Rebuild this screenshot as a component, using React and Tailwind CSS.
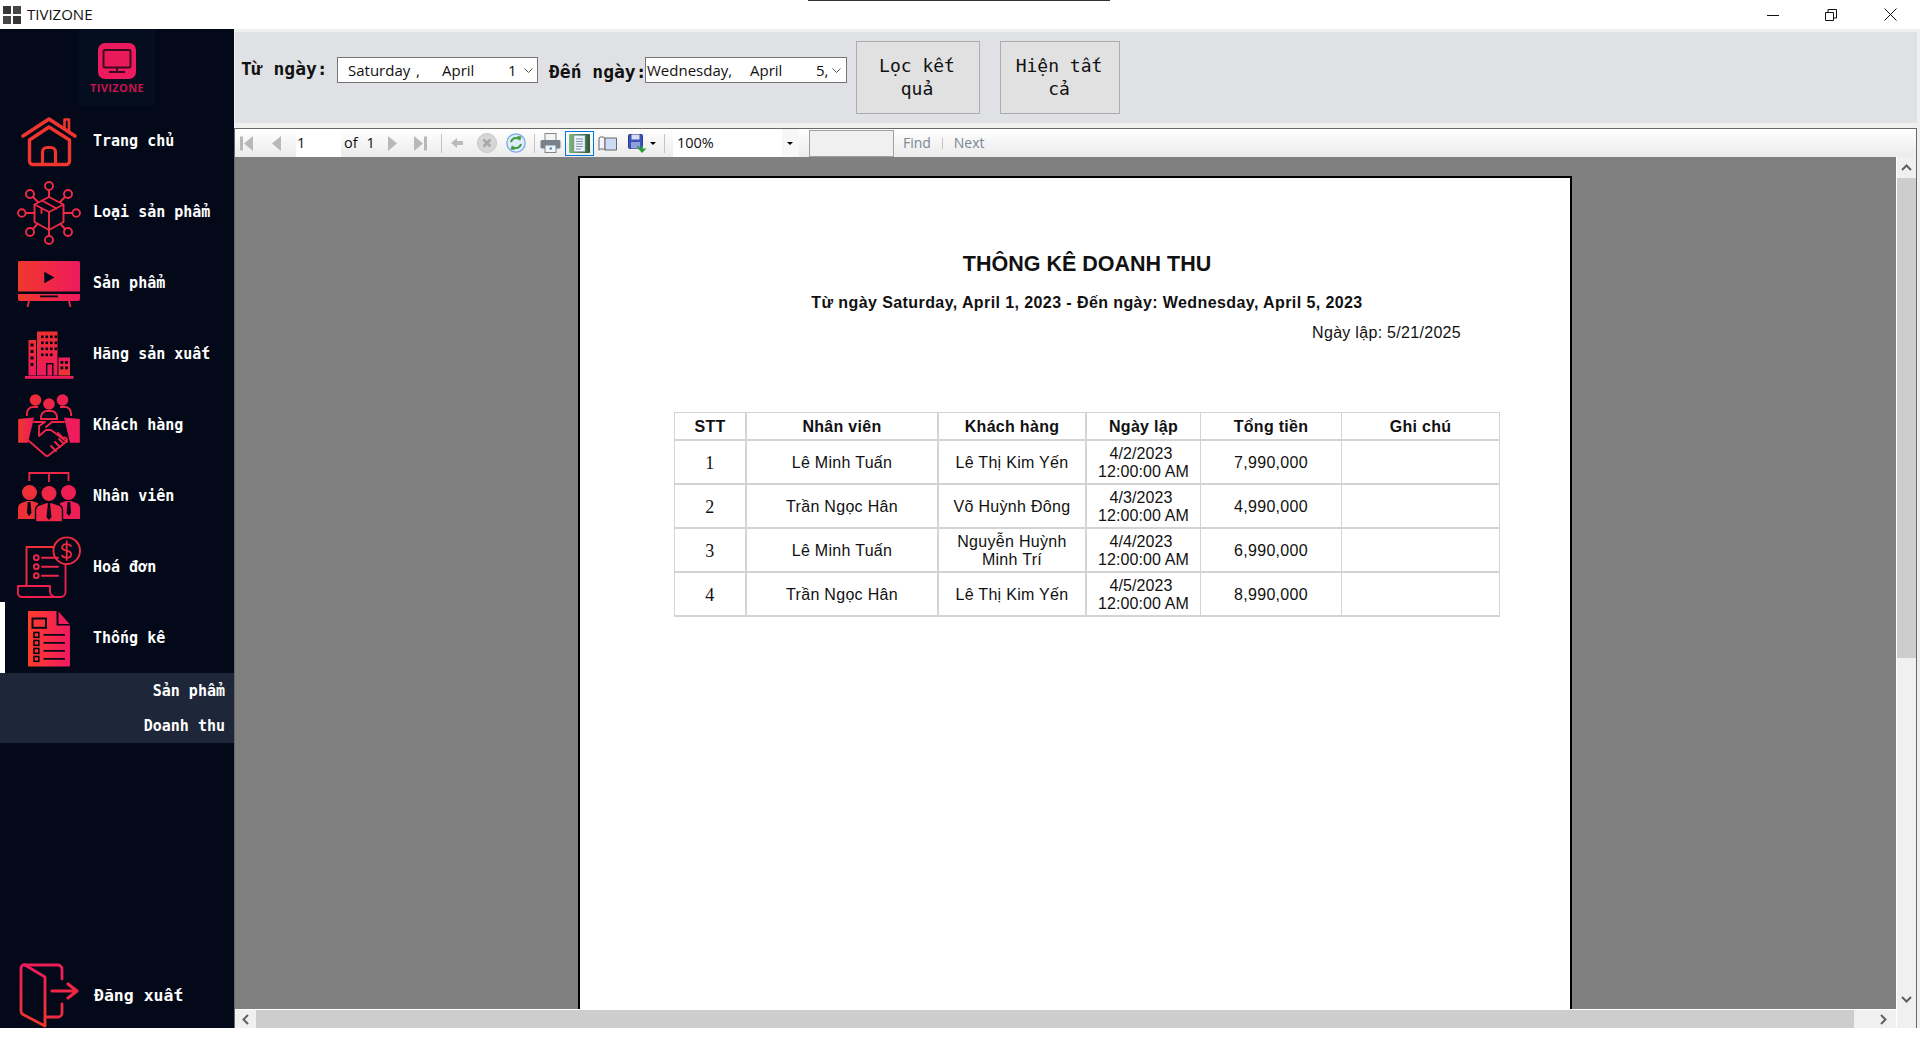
import React from 'react';

const mono = "font-['DejaVu_Sans_Mono','Liberation_Mono',monospace]";
const ui = "font-['Open_Sans','Noto_Sans',sans-serif]";
const arial = "font-['Liberation_Sans',Arial,sans-serif]";

const DARK = '#030919';

const Grads = () => (
  <svg width="0" height="0" className="absolute">
    <defs>
      <linearGradient id="gh" x1="0" y1="0" x2="1" y2="0">
        <stop offset="0" stopColor="#f0382c" />
        <stop offset="1" stopColor="#ee1a5e" />
      </linearGradient>
      <linearGradient id="gv" x1="0" y1="0" x2="0" y2="1">
        <stop offset="0" stopColor="#ee3030" />
        <stop offset="1" stopColor="#ee1a5e" />
      </linearGradient>
      <linearGradient id="gu" x1="0" y1="0" x2="0" y2="1">
        <stop offset="0" stopColor="#ee1a5e" />
        <stop offset="1" stopColor="#f0382c" />
      </linearGradient>
      <linearGradient id="gd" x1="0" y1="0" x2="1" y2="0">
        <stop offset="0" stopColor="#ff3d28" />
        <stop offset="1" stopColor="#ee1a62" />
      </linearGradient>
      <linearGradient id="gpage" x1="0" y1="0" x2="1" y2="0">
        <stop offset="0" stopColor="#7fb87f" />
        <stop offset="1" stopColor="#2f5a38" />
      </linearGradient>
    </defs>
  </svg>
);

const HomeIcon = () => (
  <svg width="64" height="71" viewBox="0 0 64 71" fill="none" stroke="#f0352f" strokeLinecap="round" strokeLinejoin="round">
    <path d="M6 31 L32 14 L58 31" strokeWidth="3.6" />
    <path d="M47.5 23 V14.5 H52 V27" strokeWidth="2.6" />
    <path d="M12.5 35 V56 a3.5 3.5 0 0 0 3.5 3.5 H49 a3.5 3.5 0 0 0 3.5-3.5 V35 L32 22 Z" strokeWidth="3.4" />
    <path d="M25.5 59 V47 a4.5 4.5 0 0 1 4.5-4.5 h4 a4.5 4.5 0 0 1 4.5 4.5 V59" strokeWidth="3.2" />
  </svg>
);

const BoxIcon = () => (
  <svg width="64" height="71" viewBox="0 0 64 71" fill="none" stroke="#ee2a45" strokeWidth="1.9" strokeLinejoin="round" strokeLinecap="round">
    <path d="M32 21 L46.5 28.5 V46 L32 54 L17.5 46 V28.5 Z" />
    <path d="M17.5 28.5 L32 36 L46.5 28.5 M32 36 V54 M25 24.5 L39.5 32.5 M24.5 32 V37" />
    <circle cx="32" cy="10" r="4" />
    <circle cx="32" cy="64" r="4" />
    <circle cx="4.8" cy="37" r="3.8" />
    <circle cx="59.2" cy="37" r="3.8" />
    <circle cx="13" cy="18" r="4" />
    <circle cx="51" cy="18" r="4" />
    <circle cx="13" cy="56" r="4" />
    <circle cx="51" cy="56" r="4" />
    <path d="M32 14 V21 M32 54 V60 M8.6 37 H17.5 M46.5 37 H55.4 M16 21 L21 26 M48 21 L43 26 M16 53 L20.5 48 M48 53 L43.5 48" />
  </svg>
);

const TvIcon = () => (
  <svg width="64" height="71" viewBox="0 0 64 71">
    <path d="M2.5 14 H61.5 a1.5 1.5 0 0 1 1.5 1.5 V44.5 H1 V15.5 a1.5 1.5 0 0 1 1.5-1.5 Z" fill="url(#gh)" />
    <path d="M1 47 H63 V52 a2 2 0 0 1-2 2 H3 a2 2 0 0 1-2-2 Z" fill="url(#gh)" />
    <path d="M12 54 L10.5 60 M52 54 L53.5 60" stroke="#ef2a45" strokeWidth="1.8" />
    <rect x="23" y="48.5" width="18" height="1.8" fill={DARK} />
    <path d="M27.3 24.7 L37.3 30.4 L27.3 36.3 Z" fill={DARK} />
  </svg>
);

const BuildingIcon = () => {
  const win = [];
  [24, 28.5, 33, 37.5].forEach(x => [17.5, 23.5, 29.5, 35.5].forEach(y => {
    if (!(y === 35.5 && x === 37.5)) win.push(<rect key={`${x}-${y}`} x={x} y={y} width="2.6" height="2.6" fill={DARK} />);
  }));
  return (
    <svg width="64" height="71" viewBox="0 0 64 71">
      <rect x="20" y="13.5" width="20.5" height="44" fill="url(#gv)" />
      <rect x="11.5" y="22" width="7.5" height="35.5" fill="url(#gv)" />
      <rect x="41.5" y="39.5" width="11.5" height="18" fill="url(#gu)" />
      <rect x="8" y="58" width="48.5" height="2.8" fill="#ee1a5e" />
      {win}
      {[25.5, 32, 38.5, 45].map(y => <rect key={y} x="13.5" y={y} width="3" height="3" fill={DARK} />)}
      <rect x="29" y="45" width="7.5" height="12.5" fill={DARK} />
      <rect x="30.4" y="46.4" width="4.7" height="11.1" fill="#ee1e55" />
      {[43, 48.5].map(y => [43.5, 48].map(x => <rect key={`${x}${y}`} x={x} y={y} width="2.8" height="2.8" fill={DARK} />))}
    </svg>
  );
};

const ClientIcon = () => (
  <svg width="64" height="71" viewBox="0 0 64 71">
    <circle cx="18.5" cy="11" r="5.8" fill="#ee2d3a" />
    <circle cx="32" cy="15" r="5.8" fill="#ee2645" />
    <circle cx="45.5" cy="11" r="5.8" fill="#ee2050" />
    <g fill="none" stroke="#ee2748" strokeWidth="1.9">
      <path d="M10 27 V24 a6 6 0 0 1 6-6 h5" />
      <path d="M54 27 V24 a6 6 0 0 0-6-6 h-5" />
      <path d="M24 30 V28 a6 6 0 0 1 6-6 h4 a6 6 0 0 1 6 6 v2 Z" />
    </g>
    <path d="M1.2 30 L17 28.5 L11 53.7 H1.2 Z" fill="url(#gh)" />
    <path d="M62.8 30 L47 28.5 L53 53.7 H62.8 Z" fill="#ee1c5a" />
    <g fill="none" stroke="#ee2648" strokeWidth="1.9" strokeLinejoin="round" strokeLinecap="round">
      <path d="M12 52 L28 66 a3 3 0 0 0 4 0 L49 53 a2.5 2.5 0 0 0-3-4 L41 44" />
      <path d="M17 33 H28 L22 37 V47 L29 41 H34 L50 53" />
      <path d="M47 33 H35 L29 38" />
      <path d="M34 57 L39 62 M38 53 L43 58 M42 50 L46 54" />
    </g>
  </svg>
);

const StaffIcon = () => (
  <svg width="64" height="71" viewBox="0 0 64 71">
    <path d="M12.3 21 V13 H51.5 V21 M32 13 V22" fill="none" stroke="#ee2748" strokeWidth="1.8" />
    <circle cx="12.5" cy="32.5" r="7.5" fill="#ee2f38" />
    <circle cx="32" cy="33.5" r="7.5" fill="#ee2645" />
    <circle cx="51.5" cy="32.5" r="7.5" fill="#ee1e52" />
    <path d="M1 59 V48 a6 6 0 0 1 5-5.5 L10 41 H15 L21 43 V59 Z" fill="#ee3035" />
    <path d="M63 59 V48 a6 6 0 0 0-5-5.5 L54 41 H49 L43 43 V59 Z" fill="#ee1d55" />
    <path d="M18.5 62 V50 a6 6 0 0 1 5-5.5 L29 42.5 H35 L40.5 44.5 a6 6 0 0 1 5 5.5 V62 Z" fill="#ee2748" stroke={DARK} strokeWidth="1.4" />
    <path d="M31 43 h2 L34.5 57 L32 60 L29.5 57 Z M10.8 42 h2.6 L14.5 53 L12 56 L10 53 Z M50.6 42 h2.6 L54 53 L52 56 L49.5 53 Z" fill={DARK} />
  </svg>
);

const BillIcon = () => (
  <svg width="64" height="71" viewBox="0 0 64 71" fill="none" strokeWidth="1.9" strokeLinecap="round" strokeLinejoin="round">
    <path d="M36 16 H9.5 V54" stroke="#ee2d3a" />
    <path d="M48.5 33.5 V61 a5 5 0 0 1-5 5 H4 a4 4 0 0 1-3-3.5 V55 H33 V60 a6 6 0 0 0 5.5 6" stroke="#ee1f50" />
    <circle cx="49.7" cy="19.7" r="13.3" stroke="#ee2b3e" />
    <path d="M54 15 c-1-2-7-3-8.5 0 c-1.5 3 1.5 4 4.2 4.7 c3 .8 5.5 2 4.3 5 c-1.3 3-7.5 2.5-9-.2 M49.7 10.5 V29" stroke="#ee2b3e" strokeWidth="1.8" />
    {[26.7, 35.7, 44.7].map(y => (
      <g key={y} stroke="#ee2748">
        <circle cx="19.3" cy={y} r="2.4" />
        <path d={`M25 ${y} H41`} />
      </g>
    ))}
  </svg>
);

const ReportIcon = () => (
  <svg width="64" height="71" viewBox="0 0 64 71">
    <path d="M11 9 H39.5 V23.5 H53 V63.5 a1 1 0 0 1-1 1 H12 a1 1 0 0 1-1-1 Z" fill="url(#gd)" />
    <path d="M41.5 9.5 L52.5 22 H41.5 Z" fill="#ee1c5c" />
    <rect x="15.5" y="16.5" width="13.5" height="9.3" fill="none" stroke={DARK} strokeWidth="2" />
    {[30.5, 38.5, 46.5, 54.5].map(y => (
      <g key={y}>
        <rect x="17" y={y} width="4.8" height="4.8" fill="none" stroke={DARK} strokeWidth="1.6" />
        <rect x="26.5" y={y + 1.5} width="21.5" height="1.7" fill={DARK} />
      </g>
    ))}
  </svg>
);

const LogoutIcon = () => (
  <svg width="64" height="68" viewBox="0 0 64 68" fill="none" strokeWidth="2.8" strokeLinecap="round" strokeLinejoin="round" className="shrink-0">
    <path d="M8 5 H42 a5 5 0 0 1 3 4.5 V19" stroke="#ee1f58" />
    <path d="M45 44 V53 a4 4 0 0 1-4 4 H30" stroke="#ef2c42" />
    <path d="M7 4.5 L28 17 V66 L7 55 a4.5 4.5 0 0 1-3-4 V9 a4.5 4.5 0 0 1 3-4.5 Z" stroke="url(#gu)" />
    <path d="M35 31 H59 M51 24 L60 31 L51 38" stroke="#f02848" strokeWidth="3.2" />
  </svg>
);

const Grey = '#b8b8b8';

const ToolFirst = ({ flip }) => (
  <svg width="13" height="15" viewBox="0 0 13 15" className={flip ? 'scale-x-[-1]' : ''}>
    <rect x="0" y="0.5" width="3" height="14" fill={Grey} />
    <path d="M13 0 V15 L4 7.5 Z" fill={Grey} />
  </svg>
);

const ToolPrev = ({ flip }) => (
  <svg width="9" height="15" viewBox="0 0 9 15" className={flip ? 'scale-x-[-1]' : ''}>
    <path d="M9 0 V15 L0 7.5 Z" fill={Grey} />
  </svg>
);

const ToolBack = () => (
  <svg width="12" height="10" viewBox="0 0 12 10">
    <path d="M0 5 L6 0 V3 H12 V7 H6 V10 Z" fill="#bcbcbc" />
  </svg>
);

const ToolStop = () => (
  <svg width="20" height="20" viewBox="0 0 20 20">
    <circle cx="10" cy="10" r="9.5" fill="#d6d6d6" stroke="#c6c6c6" />
    <path d="M6.5 6.5 L13.5 13.5 M13.5 6.5 L6.5 13.5" stroke="#a8a8a8" strokeWidth="2.6" />
  </svg>
);

const ToolRefresh = () => (
  <svg width="20" height="20" viewBox="0 0 20 20" fill="none">
    <circle cx="10" cy="10" r="9.2" fill="#dfecfa" stroke="#79ace4" strokeWidth="1.3" />
    <path d="M5 9 a5 5 0 0 1 8-3" stroke="#3f9a3f" strokeWidth="2" />
    <path d="M15 11 a5 5 0 0 1-8 3" stroke="#3f9a3f" strokeWidth="2" />
    <path d="M11 3 L15.5 3.5 L14 8 Z M9 17 L4.5 16.5 L6 12 Z" fill="#3f9a3f" />
  </svg>
);

const ToolPrint = () => (
  <svg width="21" height="20" viewBox="0 0 21 20">
    <rect x="5" y="0.5" width="11" height="7" fill="#f4f4f4" stroke="#7d8790" />
    <rect x="0.5" y="7" width="20" height="8.5" rx="1.5" fill="#77828c" />
    <rect x="5" y="12" width="11" height="7.5" fill="#f2f5f8" stroke="#7d8790" />
    <rect x="9.5" y="14.5" width="2.5" height="2" fill="#3a8ad0" />
  </svg>
);

const ToolLayout = () => (
  <div className="flex h-[25px] w-[29px] items-center justify-center border border-[#0078d7]">
    <svg width="21" height="19" viewBox="0 0 21 19">
      <rect width="21" height="19" rx="1" fill="url(#gpage)" />
      <rect x="5" y="1.5" width="11" height="16" fill="#eef3fb" stroke="#8ea4c4" strokeWidth="0.6" />
      <path d="M7 5 H14 M7 7.5 H14 M7 10 H14 M7 12.5 H14 M7 15 H12" stroke="#7d90b0" strokeWidth="1" />
    </svg>
  </div>
);

const ToolBook = () => (
  <svg width="19" height="15" viewBox="0 0 19 15">
    <path d="M7 2 C5 .5 2 .5 1 2 V14 C3 12.5 5 12.5 7 14 Z" fill="#f4f4f4" stroke="#666" />
    <path d="M7 2 H18.5 V14 H7 Z" fill="#c9dcf4" stroke="#666" />
  </svg>
);

const ToolSave = () => (
  <svg width="20" height="19" viewBox="0 0 20 19">
    <rect x="0.5" y="0.5" width="14" height="14" rx="1" fill="#3d52b8" stroke="#2c3a8a" />
    <rect x="3.5" y="0.5" width="8" height="5" fill="#d8def2" />
    <rect x="3" y="8" width="9" height="6.5" fill="#8ea0de" />
    <path d="M9 11 L12.5 14 L15 11 L15 14.5 H18.5 L14 19 L10 14.5 Z" fill="#2e9a3e" />
  </svg>
);

const ToolCaret = () => <span className="h-0 w-0 border-x-[3px] border-t-[3px] border-x-transparent border-t-black" />;

const Sep = () => <span className="block h-[19px] w-px shrink-0 bg-[#c4c4c4]" />;

const Chevron = () => (
  <svg width="9" height="6" viewBox="0 0 9 6" fill="none" className="mt-[2px]">
    <path d="M.5 .5 L4.5 4.5 L8.5 .5" stroke="#555" />
  </svg>
);

const Arrow = ({ dir }) => {
  const paths = {
    up: 'M1 7 L5.5 2.5 L10 7',
    down: 'M1 2 L5.5 6.5 L10 2',
    left: 'M7 1 L2.5 5.5 L7 10',
    right: 'M2 1 L6.5 5.5 L2 10',
  };
  const vertical = dir === 'up' || dir === 'down';
  return (
    <svg width={vertical ? 11 : 9} height={vertical ? 9 : 11} viewBox={vertical ? '0 0 11 9' : '0 0 9 11'} fill="none">
      <path d={paths[dir]} stroke="#606060" strokeWidth="2" />
    </svg>
  );
};

const menu = [
  { label: 'Trang chủ', Icon: HomeIcon },
  { label: 'Loại sản phẩm', Icon: BoxIcon },
  { label: 'Sản phẩm', Icon: TvIcon },
  { label: 'Hãng sản xuất', Icon: BuildingIcon },
  { label: 'Khách hàng', Icon: ClientIcon },
  { label: 'Nhân viên', Icon: StaffIcon },
  { label: 'Hoá đơn', Icon: BillIcon },
  { label: 'Thống kê', Icon: ReportIcon, active: true },
];

const rows = [
  { stt: 1, nv: 'Lê Minh Tuấn', kh: 'Lê Thị Kim Yến', date: '4/2/2023', total: '7,990,000' },
  { stt: 2, nv: 'Trần Ngọc Hân', kh: 'Võ Huỳnh Đông', date: '4/3/2023', total: '4,990,000' },
  { stt: 3, nv: 'Lê Minh Tuấn', kh: 'Nguyễn Huỳnh Minh Trí', date: '4/4/2023', total: '6,990,000' },
  { stt: 4, nv: 'Trần Ngọc Hân', kh: 'Lê Thị Kim Yến', date: '4/5/2023', total: '8,990,000' },
];

const headers = [
  { label: 'STT', w: 'w-[72px]', b: 'border-r-2' },
  { label: 'Nhân viên', w: 'w-[192px]', b: 'border-r-2' },
  { label: 'Khách hàng', w: 'w-[148px]', b: 'border-r-2' },
  { label: 'Ngày lập', w: 'w-[114px]', b: 'border-r' },
  { label: 'Tổng tiền', w: 'w-[141px]', b: 'border-r' },
  { label: 'Ghi chú', w: 'w-[158px]', b: 'border-r' },
];

const Sidebar = () => (
  <aside className={`flex w-[234px] shrink-0 flex-col bg-[#030919] text-white ${mono}`}>
    <div className="flex h-[76px] shrink-0 justify-center">
      <div className="flex w-[76px] flex-col items-center bg-[#040e1e] pt-[14px]">
        <svg width="38" height="36" viewBox="0 0 38 36">
          <rect width="38" height="36" rx="7" fill="#ee1a5e" />
          <rect x="5.5" y="7" width="27" height="17.5" rx="1.5" fill="#e81a5a" stroke="#3a0a20" strokeWidth="2" />
          <path d="M19 25 V28 M11 29 H27" stroke="#3a0a20" strokeWidth="2" />
        </svg>
        <span className={`mt-[2px] text-[11px] font-bold leading-[14px] tracking-[0.4px] text-[#c9134f] ${ui}`}>TIVIZONE</span>
      </div>
    </div>
    {menu.map(({ label, Icon, active }) => (
      <div key={label} className={`flex h-[71px] shrink-0 items-center ${active ? 'border-l-[5px] border-white pl-[12px]' : 'pl-[17px]'}`}>
        <div className="w-[76px] shrink-0"><Icon /></div>
        <span className="mt-[2px] text-[15px] font-bold leading-none">{label}</span>
      </div>
    ))}
    <div className="flex shrink-0 flex-col bg-[#1e2639] text-right text-[15px] font-bold text-white">
      <div className="flex h-[35px] items-center justify-end pr-[9px] pt-[2px]">Sản phẩm</div>
      <div className="flex h-[35px] items-center justify-end pr-[9px] pt-[2px]">Doanh thu</div>
    </div>
    <div className="mt-auto flex h-[68px] items-center pl-[17px]">
      <div className="w-[77px] shrink-0"><LogoutIcon /></div>
      <span className="mt-[5px] text-[16.5px] font-bold leading-none">Đăng xuất</span>
    </div>
  </aside>
);

const DatePicker = ({ w, pad, children }) => (
  <div className={`flex h-[26px] ${w} shrink-0 items-center border border-[#767676] bg-white text-[15px] text-[#111] ${ui} ${pad}`}>
    {children}
    <Chevron />
  </div>
);

const FilterBar = () => (
  <div className="ml-px mr-[3px] mt-[3px] flex h-[91px] shrink-0 items-start bg-[#e0e1e5] pl-[6px]">
    <span className={`mt-[27px] w-[96px] whitespace-pre text-[18px] font-bold leading-5 text-[#111] ${mono}`}>Từ ngày:</span>
    <div className="mt-[25px]">
      <DatePicker w="w-[201px]" pad="pl-[10px]">
        <span className="w-[68px] shrink-0">Saturday</span>
        <span className="w-[26px] shrink-0">,</span>
        <span className="w-[66px] shrink-0">April</span>
        <span className="w-[16px] shrink-0">1</span>
      </DatePicker>
    </div>
    <span className={`ml-[11px] mt-[30px] w-[96px] whitespace-pre text-[18px] font-bold leading-5 text-[#111] ${mono}`}>Đến ngày:</span>
    <div className="mt-[25px]">
      <DatePicker w="w-[202px]" pad="pl-[1px]">
        <span className="w-[103px] shrink-0">Wednesday,</span>
        <span className="w-[66px] shrink-0">April</span>
        <span className="w-[16px] shrink-0">5,</span>
      </DatePicker>
    </div>
    <button className={`ml-[9px] mt-[9px] h-[73px] w-[124px] border border-[#adadad] bg-[#e1e1e1] pb-[2px] pr-[2px] text-[18px] leading-[23px] text-[#111] ${mono}`}>Lọc kết<br />quả</button>
    <button className={`ml-[20px] mt-[9px] h-[73px] w-[120px] border border-[#adadad] bg-[#e1e1e1] pb-[2px] pr-[2px] text-[18px] leading-[23px] text-[#111] ${mono}`}>Hiện tất<br />cả</button>
  </div>
);

const Toolbar = () => (
  <div className={`flex h-[28px] shrink-0 items-center bg-gradient-to-b from-white to-[#ebebeb] text-[14.5px] text-[#111] ${ui}`}>
    <span className="ml-[5px] flex w-[13px]"><ToolFirst /></span>
    <span className="ml-[19px] flex w-[9px]"><ToolPrev /></span>
    <span className="ml-[15px] flex h-full w-[45px] items-center bg-white pl-[1px]">1</span>
    <span className="ml-[3px]">of</span>
    <span className="ml-[9px]">1</span>
    <span className="ml-[13px] flex w-[9px]"><ToolPrev flip /></span>
    <span className="ml-[17px] flex w-[13px]"><ToolFirst flip /></span>
    <span className="ml-[14px]"><Sep /></span>
    <span className="ml-[9px] flex"><ToolBack /></span>
    <span className="ml-[14px] flex"><ToolStop /></span>
    <span className="ml-[9px] flex"><ToolRefresh /></span>
    <span className="ml-[8px]"><Sep /></span>
    <span className="ml-[5px] flex"><ToolPrint /></span>
    <span className="ml-[4px] flex"><ToolLayout /></span>
    <span className="ml-[4px] flex"><ToolBook /></span>
    <span className="ml-[11px] flex"><ToolSave /></span>
    <span className="ml-[2px] flex"><ToolCaret /></span>
    <span className="ml-[8px]"><Sep /></span>
    <span className="ml-[8px] flex h-full w-[109px] items-center bg-white pl-[4px]">100%</span>
    <span className="flex h-full w-[17px] items-center justify-center bg-[#f7f7f7]"><ToolCaret /></span>
    <span className="ml-[10px] h-[27px] w-[85px] border border-[#a0a0a0] bg-[#f0f0f0]" />
    <span className="mb-px ml-[9px] text-[14px] text-[#7c8694]">Find</span>
    <span className="ml-[11px] h-[11px] w-px bg-[#c4c4c4]" />
    <span className="mb-px ml-[11px] text-[14px] text-[#7c8694]">Next</span>
  </div>
);

const Report = () => (
  <div className={`ml-[343px] mt-[19px] h-[1100px] w-[994px] shrink-0 border-2 border-black bg-white text-[#111] ${arial}`}>
    <h1 className="mt-[74px] pl-[24px] text-center text-[21.5px] font-bold leading-6">THÔNG KÊ DOANH THU</h1>
    <p className="mt-[17px] pl-[24px] text-center text-[16px] font-bold leading-5 tracking-[0.41px]">Từ ngày Saturday, April 1, 2023 - Đến ngày: Wednesday, April 5, 2023</p>
    <p className="mt-[10px] pr-[109px] text-right text-[16px] leading-5 tracking-[0.3px]">Ngày lập: 5/21/2025</p>
    <table className="ml-[94px] mt-[69px] w-[825px] table-fixed border-separate border-spacing-0 border-l border-t border-[#d3d3d3] text-center text-[16px] leading-[18px] tracking-[0.3px]">
      <thead>
        <tr className="h-[28px]">
          {headers.map(h => (
            <th key={h.label} className={`${h.w} ${h.b} border-b-2 border-[#d3d3d3] pt-[2px] font-bold`}>{h.label}</th>
          ))}
        </tr>
      </thead>
      <tbody>
        {rows.map(r => (
          <tr key={r.stt} className="h-[44px]">
            <td className="border-b-2 border-r-2 border-[#d3d3d3] pt-[2px] font-['Liberation_Serif',serif] text-[18px]">{r.stt}</td>
            <td className="border-b-2 border-r-2 border-[#d3d3d3] pt-[2px]">{r.nv}</td>
            <td className="border-b-2 border-r-2 border-[#d3d3d3] px-[8px] pt-[2px]">{r.kh}</td>
            <td className="border-b-2 border-r border-[#d3d3d3] pt-[2px] tracking-[0.1px]"><span className="pr-[5px]">{r.date}</span><br />12:00:00 AM</td>
            <td className="border-b-2 border-r border-[#d3d3d3] pt-[2px]">{r.total}</td>
            <td className="border-b-2 border-r border-[#d3d3d3]" />
          </tr>
        ))}
      </tbody>
    </table>
  </div>
);

const Viewer = () => (
  <div className="mr-[3px] mt-[5px] flex min-h-0 flex-1 flex-col border-x border-t border-[#696969]">
    <Toolbar />
    <div className="flex min-h-0 flex-1">
      <div className="flex min-w-0 flex-1 flex-col">
        <div className="flex min-h-0 flex-1 overflow-hidden border-b border-white bg-[#808080]">
          <Report />
        </div>
        <div className="flex h-[18px] shrink-0 items-center bg-[#f0f0f0]">
          <span className="flex w-[21px] justify-center"><Arrow dir="left" /></span>
          <span className="h-full w-[1598px] bg-[#cdcdcd]" />
          <span className="flex flex-1 justify-end pr-[8px]"><Arrow dir="right" /></span>
        </div>
      </div>
      <div className="flex w-[20px] shrink-0 flex-col border-l border-white bg-[#f0f0f0]">
        <span className="flex h-[21px] items-center justify-center"><Arrow dir="up" /></span>
        <span className="h-[480px] bg-[#cdcdcd]" />
        <span className="mb-[24px] mt-auto flex justify-center"><Arrow dir="down" /></span>
      </div>
    </div>
  </div>
);

export default function App() {
  return (
    <div className="flex h-[1039px] w-[1920px] flex-col overflow-hidden bg-white">
      <Grads />
      <header className={`relative flex h-[29px] shrink-0 items-center bg-white text-[15px] text-[#111] ${ui}`}>
        <span className="absolute left-[808px] top-0 h-px w-[302px] bg-[#333]" />
        <span className="ml-[3px] grid h-[18px] w-[18px] grid-cols-2 grid-rows-2 gap-[2px] opacity-90">
          <span className="bg-[#222]" /><span className="bg-[#333]" />
          <span className="bg-[#333]" /><span className="bg-[#222]" />
        </span>
        <span className="ml-[6px]">TIVIZONE</span>
        <div className="ml-auto flex items-center">
          <svg width="12" height="12" viewBox="0 0 12 12" fill="none" className="mr-[46px]"><path d="M0 6.5 H12" stroke="#111" /></svg>
          <svg width="12" height="12" viewBox="0 0 12 12" fill="none" className="mr-[47px]"><path d="M.5 3.5 H8.5 V11.5 H.5 Z M3 3 V.5 H11.5 V9 H9" stroke="#111" /></svg>
          <svg width="13" height="13" viewBox="0 0 13 13" fill="none" className="mr-[23px]"><path d="M.5 .5 L12.5 12.5 M12.5 .5 L.5 12.5" stroke="#111" /></svg>
        </div>
      </header>
      <div className="flex h-[999px] shrink-0">
        <Sidebar />
        <main className="flex min-w-0 flex-1 flex-col bg-[#f0f0f0]">
          <FilterBar />
          <Viewer />
        </main>
      </div>
    </div>
  );
}
